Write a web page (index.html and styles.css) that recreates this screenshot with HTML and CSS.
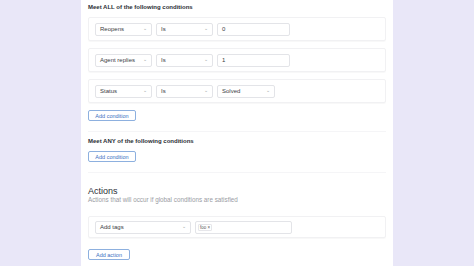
FILE: index.html
```html
<!DOCTYPE html>
<html lang="en">
<head>
    <meta charset="UTF-8">
    <meta name="viewport" content="width=device-width, initial-scale=1.0">
    <title>Trigger</title>
    <link rel="stylesheet" href="styles.css">
</head>
<body>
    <div class="page">
        <div class="panel">
            <div class="label">Meet ALL of the following conditions</div>
            <div class="cond">
                <div class="select w-field">Reopens<span class="caret">⌄</span></div>
                <div class="select w-field">Is<span class="caret">⌄</span></div>
                <div class="input w-value">0</div>
            </div>
            <div class="cond">
                <div class="select w-field">Agent replies<span class="caret">⌄</span></div>
                <div class="select w-field">Is<span class="caret">⌄</span></div>
                <div class="input w-value">1</div>
            </div>
            <div class="cond">
                <div class="select w-field">Status<span class="caret">⌄</span></div>
                <div class="select w-field">Is<span class="caret">⌄</span></div>
                <div class="select w-solved">Solved<span class="caret">⌄</span></div>
            </div>
            <button class="btn">Add condition</button>
            <div class="divider"></div>
            <div class="label any">Meet ANY of the following conditions</div>
            <button class="btn">Add condition</button>
            <div class="divider"></div>
            <div class="title">Actions</div>
            <div class="sub">Actions that will occur if global conditions are satisfied</div>
            <div class="cond action">
                <div class="select w-tags">Add tags<span class="caret">⌄</span></div>
                <div class="input w-taginput"><span class="tag">foo ×</span></div>
            </div>
            <button class="btn small">Add action</button>
        </div>
    </div>
</body>
</html>
```

FILE: styles.css
```css
body {
    margin: 0;
    background-color: #e9e7f8;
    font-family: "Liberation Sans", Arial, sans-serif;
    color: #2b2f36;
}

.page {
    display: flex;
    justify-content: flex-start;
    padding-left: 81px;
}

.panel {
    width: 298px;
    height: 266px;
    background-color: #fff;
    padding: 4px 7px 0 7px;
    box-sizing: content-box;
}

.label {
    font-size: 6px;
    font-weight: bold;
    height: 7px;
    line-height: 7px;
    margin-bottom: 6px;
}

.cond {
    display: flex;
    align-items: center;
    gap: 4px;
    height: 22px;
    padding: 0 6px;
    border: 1px solid #f1f1f3;
    border-radius: 2px;
    margin-bottom: 7px;
    box-shadow: 0 1px 1px rgba(0, 0, 0, 0.03);
}

.select,
.input {
    display: flex;
    align-items: center;
    justify-content: space-between;
    height: 13px;
    padding: 0 4px;
    box-sizing: border-box;
    border: 1px solid #e3e4e8;
    border-radius: 2px;
    font-size: 6px;
    color: #3a3d44;
}

.caret {
    color: #9a9ca3;
    font-size: 5px;
    line-height: 5px;
    margin-top: -2px;
}

.w-field {
    width: 57px;
}

.w-value {
    width: 73px;
}

.w-solved {
    width: 58px;
}

.w-tags {
    width: 96px;
}

.w-taginput {
    width: 97px;
    padding: 0 2px;
}

.tag {
    font-size: 4.5px;
    border: 1px solid #e6e6ea;
    border-radius: 1px;
    padding: 0 1px;
    color: #555;
}

.action {
    height: 20px;
    margin-top: 13px;
    margin-bottom: 11px;
}

.btn {
    display: block;
    width: 48px;
    height: 11px;
    padding: 0;
    margin-top: 1px;
    background-color: #fff;
    border: 1px solid #8db0df;
    border-radius: 2px;
    color: #3c6fbf;
    font-family: "Liberation Sans", Arial, sans-serif;
    font-size: 5.5px;
}

.btn.small {
    width: 42px;
}

.divider {
    height: 1px;
    background-color: #f5f5f7;
    margin: 10px 0 6px 0;
}

.label.any {
    margin-bottom: 6px;
}

.title {
    font-size: 9px;
    margin-top: 13px;
    height: 10px;
    line-height: 10px;
}

.sub {
    font-size: 6.3px;
    color: #9a9ca3;
    height: 7px;
    line-height: 7px;
}
```
